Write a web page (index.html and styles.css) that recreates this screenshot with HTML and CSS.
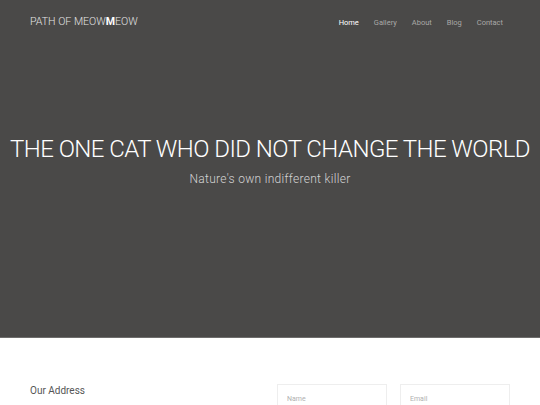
FILE: index.html
```html
<!DOCTYPE html>
<html lang="en">
<head>
    <meta charset="UTF-8">
    <meta name="viewport" content="width=device-width, initial-scale=1.0">
    <title>Path of Meowmeow</title>
    <link rel="stylesheet" href="styles.css">
</head>
<body>
    <header class="hero">
        <nav class="topbar">
            <a class="logo" href="#">PATH OF MEOW<strong>M</strong>EOW</a>
            <ul class="menu">
                <li><a class="active" href="#">Home</a></li>
                <li><a href="#">Gallery</a></li>
                <li><a href="#">About</a></li>
                <li><a href="#">Blog</a></li>
                <li><a href="#">Contact</a></li>
            </ul>
        </nav>
        <div class="hero-text">
            <h1>THE ONE CAT WHO DID NOT CHANGE THE WORLD</h1>
            <p>Nature's own indifferent killer</p>
        </div>
    </header>

    <section class="contact">
        <div class="address">
            <h3>Our Address</h3>
        </div>
        <form class="contact-form">
            <input type="text" placeholder="Name">
            <input type="text" placeholder="Email">
        </form>
    </section>
</body>
</html>
```

FILE: styles.css
```css
* {
    box-sizing: border-box;
}
body {
    margin: 0;
    font-family: Roboto, sans-serif;
    background-color: #fff;
}
.hero {
    height: 338px;
    background-color: #4a4948;
    border-bottom: 1px solid #6e6d6c;
    display: flex;
    flex-direction: column;
}
.topbar {
    display: flex;
    justify-content: space-between;
    align-items: center;
    padding: 17px 30px 0 30px;
    line-height: 1;
}
.logo {
    color: #e4e4e4;
    text-decoration: none;
    font-size: 10.6px;
    font-weight: 300;
}
.logo strong {
    color: #fff;
    font-weight: 700;
}
.menu {
    display: flex;
    list-style: none;
    margin: 0;
    padding: 0 7px 0 0;
    gap: 15px;
    font-size: 7.5px;
}
.menu a {
    color: #a9a8a7;
    text-decoration: none;
}
.menu a.active {
    color: #fff;
}
.hero-text {
    text-align: center;
    margin-top: 107px;
}
.hero-text h1 {
    margin: 0;
    color: #fff;
    font-weight: 300;
    font-size: 24px;
    letter-spacing: -0.55px;
    white-space: nowrap;
}
.hero-text p {
    margin: 9px 0 0 0;
    color: #d4d4d4;
    font-size: 12px;
    font-weight: 300;
    letter-spacing: 0.3px;
}
.contact {
    display: flex;
    padding: 46px 30px 0 30px;
    gap: 20px;
}
.address {
    flex: 1;
}
.address h3 {
    margin: 1px 0 0 0;
    font-weight: 400;
    font-size: 10px;
    color: #555;
}
.contact-form {
    display: flex;
    gap: 13px;
}
.contact-form input {
    width: 110px;
    height: 26px;
    border: 1px solid #eee;
    padding: 4px 9px 0 9px;
    font-family: Roboto, sans-serif;
    font-size: 7px;
}
.contact-form input::placeholder {
    color: #b0b0b0;
}
```
